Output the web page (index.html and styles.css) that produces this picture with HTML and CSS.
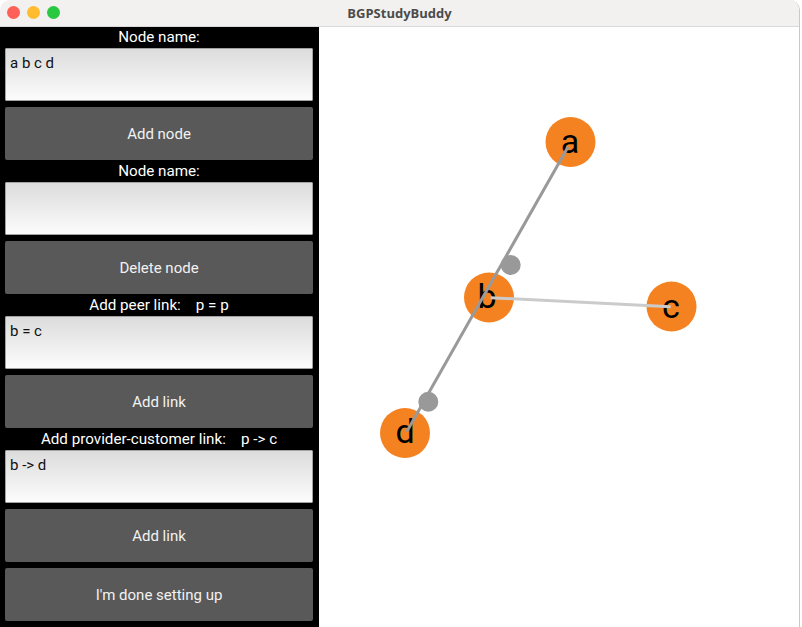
FILE: index.html
```html
<!DOCTYPE html>
<html lang="en">
<head>
    <meta charset="UTF-8">
    <meta name="viewport" content="width=device-width, initial-scale=1.0">
    <title>BGPStudyBuddy</title>
    <link rel="stylesheet" href="styles.css">
</head>
<body>
    <div class="window">
        <div class="titlebar">
            <div class="lights">
                <span class="light red"></span>
                <span class="light yellow"></span>
                <span class="light green"></span>
            </div>
            <div class="title">BGPStudyBuddy</div>
        </div>

        <div class="content">
            <div class="sidebar">
                <div class="group">
                    <div class="label">Node name:</div>
                    <textarea class="field">a b c d</textarea>
                    <button class="btn">Add node</button>
                </div>
                <div class="group">
                    <div class="label">Node name:</div>
                    <textarea class="field"></textarea>
                    <button class="btn">Delete node</button>
                </div>
                <div class="group">
                    <div class="label">Add peer link:    p = p</div>
                    <textarea class="field">b = c</textarea>
                    <button class="btn">Add link</button>
                </div>
                <div class="group">
                    <div class="label">Add provider-customer link:    p -&gt; c</div>
                    <textarea class="field">b -&gt; d</textarea>
                    <button class="btn">Add link</button>
                </div>
                <button class="btn done">I'm done setting up</button>
            </div>

            <!-- graph canvas -->
            <div class="canvas">
                <svg class="graph" width="480" height="600" viewBox="0 0 480 600">
                    <g class="nodes">
                        <circle cx="251.5" cy="115" r="25"/>
                        <circle cx="170" cy="270.5" r="25"/>
                        <circle cx="352.5" cy="279.5" r="25"/>
                        <circle cx="86" cy="406" r="25"/>
                    </g>
                    <g class="names">
                        <text x="251" y="126">a</text>
                        <text x="168" y="281">b</text>
                        <text x="352" y="291">c</text>
                        <text x="86" y="416">d</text>
                    </g>
                    <line class="edge pc" x1="249" y1="120" x2="87.7" y2="404.7"/>
                    <line class="edge peer" x1="171.7" y1="270.7" x2="351.7" y2="279.7"/>
                    <circle class="arrow" cx="191.7" cy="238" r="10"/>
                    <circle class="arrow" cx="109.3" cy="374.7" r="10"/>
                </svg>
            </div>
        </div>
    </div>
</body>
</html>
```

FILE: styles.css
```css
body {
    margin: 0;
    padding: 0;
    background-color: #fff;
    font-family: Roboto, "Liberation Sans", sans-serif;
}

.window {
    width: 799px;
    height: 627px;
    border-right: 1px solid #c9c9c9;
    border-radius: 10px 10px 0 0;
    overflow: hidden;
    display: flex;
    flex-direction: column;
}

.titlebar {
    height: 26px;
    flex-shrink: 0;
    background-color: #f2f1f0;
    border-bottom: 1px solid #d9d9d9;
    position: relative;
    display: flex;
    align-items: center;
    justify-content: center;
}

.lights {
    position: absolute;
    left: 7px;
    top: 6px;
    display: flex;
    gap: 7px;
}

.light {
    width: 13px;
    height: 13px;
    border-radius: 50%;
}

.light.red {
    background-color: #fe5f57;
}

.light.yellow {
    background-color: #febc2e;
}

.light.green {
    background-color: #28c840;
}

.title {
    font-family: "Open Sans", "Liberation Sans", sans-serif;
    font-size: 13px;
    font-weight: bold;
    color: #4b4b4b;
}

.content {
    flex: 1;
    display: flex;
    min-height: 0;
}

.sidebar {
    width: 319px;
    flex-shrink: 0;
    background-color: #000;
    padding: 0 6px 0 5px;
    box-sizing: border-box;
    display: flex;
    flex-direction: column;
}

.group {
    display: flex;
    flex-direction: column;
    margin-bottom: 1px;
}

.label {
    height: 21px;
    line-height: 21px;
    text-align: center;
    color: #fff;
    font-size: 15.2px;
    white-space: pre;
}

.field {
    height: 53px;
    margin: 0;
    padding: 5px 4px;
    box-sizing: border-box;
    resize: none;
    border: 1px solid #a3a3a3;
    border-radius: 1px;
    background: linear-gradient(#dcdcdc, #fcfcfc);
    font-family: Roboto, "Liberation Sans", sans-serif;
    font-size: 15px;
    color: #111;
    outline: none;
}

.btn {
    height: 53px;
    margin-top: 6px;
    border: none;
    border-radius: 2px;
    background-color: #595959;
    color: #f2f2f2;
    font-family: Roboto, "Liberation Sans", sans-serif;
    font-size: 15px;
    padding: 0;
    cursor: pointer;
}

.btn.done {
    margin-top: 5px;
}

.canvas {
    flex: 1;
    background-color: #fff;
    overflow: hidden;
}

.graph {
    display: block;
}

.nodes circle {
    fill: #f58220;
}

.names text {
    font-family: Roboto, "Liberation Sans", sans-serif;
    font-size: 34px;
    fill: #000;
    text-anchor: middle;
}

.edge {
    stroke-width: 3;
}

.edge.pc {
    stroke: #999;
}

.edge.peer {
    stroke: #cbcbcb;
}

.arrow {
    fill: #999;
}
```
